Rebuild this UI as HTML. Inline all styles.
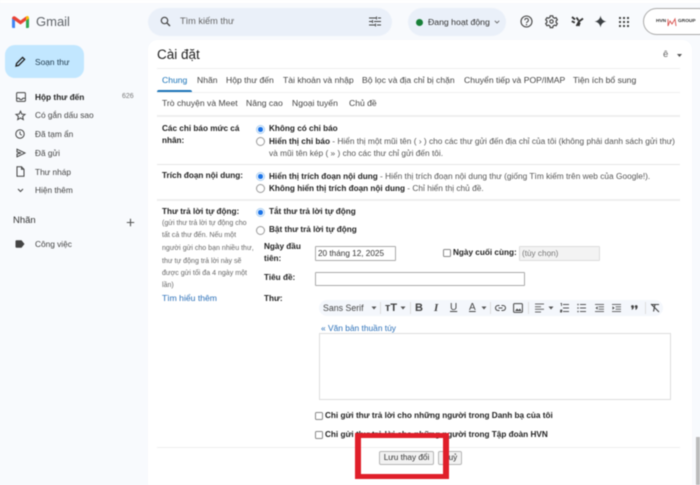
<!DOCTYPE html>
<html lang="vi">
<head>
<meta charset="utf-8">
<title>Gmail - Cài đặt</title>
<style>
html,body{margin:0;padding:0;}
body{width:700px;height:485px;overflow:hidden;background:#f8fafd;position:relative;font-family:"Liberation Sans","Noto Sans CJK SC",sans-serif;}
#w{position:absolute;left:0;top:0;width:700px;height:485px;filter:blur(.4px);}
.a{position:absolute;}
.t{position:absolute;white-space:nowrap;font-size:8.6px;line-height:12px;color:#444;transform:translateY(-6px);}
.b{font-weight:bold;color:#222;font-size:8.2px;}
.g{color:#555;font-size:8.33px;}
.s{font-size:7.05px;color:#666;}
.n{color:#444;font-size:8.3px;}
.l{color:#2a6fb8;}
.hr{position:absolute;left:157px;width:523px;height:1px;background:#e6e6e6;}
.r{position:absolute;width:7px;height:7px;border:1px solid #999;border-radius:50%;background:#fff;}
.r.on{border-color:#a9cdf0;background:#fff;}
.r.on:after{content:"";position:absolute;left:1.2px;top:1.2px;width:4.6px;height:4.6px;border-radius:50%;background:#1a73e8;}
.c{position:absolute;width:6px;height:6px;border:1px solid #8a8a8a;border-radius:1.5px;background:#fff;}
.i{position:absolute;border:1px solid #aaa;background:#fff;box-sizing:border-box;border-radius:1px;font-size:8.2px;line-height:13px;padding-left:2px;color:#333;white-space:nowrap;}
.btn{position:absolute;box-sizing:border-box;border:1px solid #b5b5b5;border-radius:2px;background:#f2f2f2;font-size:8.2px;line-height:12px;text-align:center;color:#333;}
svg{position:absolute;overflow:visible;}
</style>
</head>
<body>
<div id="w">
<div class="a" style="left:0;top:0;width:700px;height:3px;background:#fff"></div>

<!-- Logo -->
<svg style="left:11px;top:15px" width="19" height="14" viewBox="0 0 19 14">
<path d="M1 13V3l3 2v8H2a1 1 0 0 1-1-1z" fill="#4285f4"/>
<path d="M15 13V5l3-2v9a1 1 0 0 1-1 1z" fill="#34a853"/>
<path d="M15 1.5l1-.5c1-.3 2 .5 2 2v.5l-3 2z" fill="#fbbc04"/>
<path d="M1 3.500C1 1.500 3 .6 4.500 1.700L9.500 5.500 15 1.500V5.500L9.500 9.500 1 3.500z" fill="#ea4335"/>
</svg>
<div class="t" style="left:36px;top:22px;font-size:13px;line-height:16px;transform:translateY(-8px);color:#5f6368">Gmail</div>

<!-- Compose -->
<div class="a" style="left:5px;top:45px;width:79px;height:33px;background:#c2e7ff;border-radius:10px"></div>
<svg style="left:15px;top:56px" width="11" height="11" viewBox="0 0 11 11"><path d="M1 10l.6-2.600 6-6 2 2-6 6z" fill="none" stroke="#1f1f1f" stroke-width="1.300"/></svg>
<div class="t" style="left:35px;top:62px;font-size:8.400px;color:#1f3a4d">Soạn thư</div>

<!-- Side nav -->
<svg style="left:16px;top:92px" width="10" height="10" viewBox="0 0 10 10"><rect x=".6" y=".6" width="8.800" height="8.800" rx="1" fill="none" stroke="#444" stroke-width="1"/><path d="M.6 6.200h2.500a2 2 0 0 0 3.800 0h2.500" fill="none" stroke="#444" stroke-width="1"/></svg>
<div class="t b" style="left:35px;top:97px;font-size:8.300px">Hộp thư đến</div>
<div class="t" style="left:122px;top:97px;font-size:7px;color:#777">626</div>
<svg style="left:15px;top:110px" width="11" height="11" viewBox="0 0 11 11"><path d="M5.500 1.200l1.300 2.900 3.200.3-2.400 2.100.7 3.100-2.800-1.700-2.800 1.700.7-3.100L1 4.400l3.200-.3z" fill="none" stroke="#444" stroke-width="1"/></svg>
<div class="t n" style="left:35px;top:115px">Có gắn dấu sao</div>
<svg style="left:15px;top:129px" width="10" height="10" viewBox="0 0 10 10"><circle cx="5" cy="5" r="4.200" fill="none" stroke="#444" stroke-width="1"/><path d="M5 2.500V5l1.800 1.200" fill="none" stroke="#444" stroke-width=".9"/></svg>
<div class="t n" style="left:35px;top:134px">Đã tạm ẩn</div>
<svg style="left:16px;top:148px" width="10" height="10" viewBox="0 0 10 10"><path d="M1 1.200L9 5 1 8.800V6l4-1-4-1z" fill="none" stroke="#444" stroke-width="1"/></svg>
<div class="t n" style="left:35px;top:153px">Đã gửi</div>
<svg style="left:16px;top:166px" width="9" height="11" viewBox="0 0 9 11"><path d="M1 .8h4.500L8 3.300v6.900H1z M5.500.8v2.500H8" fill="none" stroke="#444" stroke-width="1"/></svg>
<div class="t n" style="left:35px;top:172px">Thư nháp</div>
<svg style="left:17px;top:188px" width="7" height="5" viewBox="0 0 7 5"><path d="M1 1l2.500 2.500L6 1" fill="none" stroke="#444" stroke-width="1"/></svg>
<div class="t n" style="left:35px;top:190px">Hiện thêm</div>
<div class="t" style="left:13px;top:221px;font-size:9.500px;color:#333">Nhãn</div>
<svg style="left:126px;top:218px" width="9" height="9" viewBox="0 0 9 9"><path d="M4.500 .8v7.400M.8 4.500h7.400" stroke="#555" stroke-width="1.100"/></svg>
<svg style="left:15px;top:240px" width="10" height="8" viewBox="0 0 10 8"><path d="M.5 1.300a1 1 0 0 1 1-1h5l3 3.700-3 3.700h-5a1 1 0 0 1-1-1z" fill="#444"/></svg>
<div class="t n" style="left:35px;top:244px">Công việc</div>

<!-- Search -->
<div class="a" style="left:148px;top:8px;width:244px;height:28px;background:#eaf0f9;border-radius:14px"></div>
<svg style="left:160px;top:16px" width="11" height="11" viewBox="0 0 11 11"><circle cx="4.500" cy="4.500" r="3.200" fill="none" stroke="#444" stroke-width="1.200"/><path d="M7 7l3 3" stroke="#444" stroke-width="1.300"/></svg>
<div class="t" style="left:180px;top:21px;font-size:9.200px;color:#666">Tìm kiếm thư</div>
<svg style="left:369px;top:16px" width="12" height="11" viewBox="0 0 12 11"><path d="M0 2h7M9 2h3M0 5.500h3M5 5.500h7M0 9h6M8 9h4M7.500 .5v3M3.500 4v3M6.500 7.500v3" stroke="#444" stroke-width=".9" fill="none"/></svg>

<!-- Status -->
<div class="a" style="left:408px;top:8px;width:98px;height:28px;background:#eaf0f9;border-radius:14px"></div>
<div class="a" style="left:416px;top:19px;width:7px;height:7px;border-radius:50%;background:#188038"></div>
<div class="t" style="left:428px;top:22px;font-size:8.700px;color:#333">Đang hoạt động</div>
<svg style="left:494px;top:20px" width="6" height="4" viewBox="0 0 6 4"><path d="M.8.800L3 3 5.200.800" fill="none" stroke="#666" stroke-width=".9"/></svg>

<!-- Top right icons -->
<svg style="left:520px;top:15px" width="13" height="13" viewBox="0 0 13 13"><circle cx="6.500" cy="6.500" r="5.500" fill="none" stroke="#444" stroke-width="1.100"/><path d="M4.800 5.200a1.800 1.800 0 1 1 2.700 1.500c-.6.400-1 .7-1 1.400" fill="none" stroke="#444" stroke-width="1"/><circle cx="6.500" cy="9.700" r=".7" fill="#444"/></svg>
<svg style="left:545px;top:15px" width="13" height="13" viewBox="0 0 13 13"><path d="M5.300 .8h2.400l.4 1.600 1.400.8 1.600-.5 1.200 2.100-1.200 1.100v1.600l1.200 1.100-1.200 2.100-1.600-.5-1.400.8-.4 1.600H5.300l-.4-1.600-1.400-.8-1.600.5L.7 8.600l1.200-1.100V5.900L.7 4.800l1.200-2.100 1.600.5 1.400-.8z" fill="none" stroke="#444" stroke-width="1.200"/><circle cx="6.500" cy="6.500" r="1.700" fill="none" stroke="#444" stroke-width="1.100"/></svg>
<svg style="left:571px;top:16px" width="13" height="11" viewBox="0 0 13 11"><path d="M1 1l3 2.500M.8 5.200l3 1.500M5.500 1.500l2 3M12 2.500L8 5.500 5.500 10M8.800 6.500L7.500 10" fill="none" stroke="#333" stroke-width="1.800"/></svg>
<svg style="left:594px;top:15px" width="13" height="13" viewBox="0 0 13 13"><path d="M6.500 .5C7 4 9 6 12.500 6.500 9 7 7 9 6.500 12.500 6 9 4 7 .5 6.500 4 6 6 4 6.500 .5z" fill="#3c4043"/></svg>
<svg style="left:619px;top:17px" width="10" height="10" viewBox="0 0 10 10" fill="#444"><rect x="0" y="0" width="2" height="2"/><rect x="4" y="0" width="2" height="2"/><rect x="8" y="0" width="2" height="2"/><rect x="0" y="4" width="2" height="2"/><rect x="4" y="4" width="2" height="2"/><rect x="8" y="4" width="2" height="2"/><rect x="0" y="8" width="2" height="2"/><rect x="4" y="8" width="2" height="2"/><rect x="8" y="8" width="2" height="2"/></svg>
<div class="a" style="left:643px;top:8px;width:70px;height:27px;box-sizing:border-box;border:1px solid #aaa;border-radius:14px;background:#fff"></div>
<div class="t" style="left:656px;top:22px;font-size:4.800px;font-weight:bold;color:#333">HVN</div>
<svg style="left:667px;top:18px" width="10" height="9" viewBox="0 0 10 9"><path d="M1 1v7M1 8l2-5 2 3 3-5 1 7" fill="none" stroke="#d9534f" stroke-width=".9"/></svg>
<div class="t" style="left:678px;top:22px;font-size:4.800px;font-weight:bold;color:#333">GROUP</div>

<!-- Main panel -->
<div class="a" style="left:148px;top:40px;width:544px;height:445px;background:#fff;border-radius:10px 10px 0 0"></div>
<div class="t" style="left:157px;top:55px;font-size:13.500px;line-height:16px;transform:translateY(-8px);color:#222">Cài đặt</div>
<div class="t" style="left:663px;top:55px;font-size:9.500px;color:#666">ê</div>
<svg style="left:677px;top:54px" width="5" height="3" viewBox="0 0 5 3"><path d="M0 0h5L2.500 3z" fill="#555"/></svg>
<div class="a" style="left:157px;top:68px;width:523px;height:1px;background:#eee"></div>

<!-- Tabs -->
<div class="t" style="left:162px;top:80px;color:#1a73b8">Chung</div>
<div class="t" style="left:197px;top:80px">Nhãn</div>
<div class="t" style="left:226px;top:80px">Hộp thư đến</div>
<div class="t" style="left:283px;top:80px">Tài khoản và nhập</div>
<div class="t" style="left:362px;top:80px">Bộ lọc và địa chỉ bị chặn</div>
<div class="t" style="left:464px;top:80px">Chuyển tiếp và POP/IMAP</div>
<div class="t" style="left:573px;top:80px">Tiện ích bổ sung</div>
<div class="a" style="left:157px;top:90px;width:35px;height:2px;background:#1a73b8;border-radius:2px 2px 0 0"></div>
<div class="a" style="left:157px;top:92px;width:523px;height:1px;background:#f0f0f0"></div>
<div class="t" style="left:162px;top:103px">Trò chuyện và Meet</div>
<div class="t" style="left:246px;top:103px">Nâng cao</div>
<div class="t" style="left:292px;top:103px">Ngoại tuyến</div>
<div class="t" style="left:349px;top:103px">Chủ đề</div>
<div class="a" style="left:157px;top:115px;width:523px;height:2px;background:#eee"></div>

<!-- Section 1 -->
<div class="t b" style="left:162px;top:129px">Các chỉ báo mức cá</div>
<div class="t b" style="left:162px;top:141px">nhân:</div>
<span class="r on" style="left:256px;top:125px"></span>
<div class="t b" style="left:269px;top:129px">Không có chỉ báo</div>
<span class="r" style="left:256px;top:137px"></span>
<div class="t g" style="left:269px;top:141px"><span class="b">Hiển thị chỉ báo</span> - Hiển thị một mũi tên ( › ) cho các thư gửi đến địa chỉ của tôi (không phải danh sách gửi thư)</div>
<div class="t g" style="left:269px;top:153px">và mũi tên kép ( » ) cho các thư chỉ gửi đến tôi.</div>
<div class="hr" style="top:164px"></div>

<!-- Section 2 -->
<div class="t b" style="left:162px;top:176px">Trích đoạn nội dung:</div>
<span class="r on" style="left:256px;top:172px"></span>
<div class="t g" style="left:269px;top:176px"><span class="b">Hiển thị trích đoạn nội dung</span> - Hiển thị trích đoạn nội dung thư (giống Tìm kiếm trên web của Google!).</div>
<span class="r" style="left:256px;top:184px"></span>
<div class="t g" style="left:269px;top:188px"><span class="b">Không hiển thị trích đoạn nội dung</span> - Chỉ hiển thị chủ đề.</div>
<div class="a" style="left:157px;top:199px;width:523px;height:2px;background:#eee"></div>

<!-- Section 3 -->
<div class="t b" style="left:162px;top:212px">Thư trả lời tự động:</div>
<div class="t s" style="left:162px;top:224px">(gửi thư trả lời tự động cho</div>
<div class="t s" style="left:162px;top:236px">tất cả thư đến. Nếu một</div>
<div class="t s" style="left:162px;top:249px">người gửi cho bạn nhiều thư,</div>
<div class="t s" style="left:162px;top:262px">thư tự động trả lời này sẽ</div>
<div class="t s" style="left:162px;top:274px">được gửi tối đa 4 ngày một</div>
<div class="t s" style="left:162px;top:286px">lần)</div>
<div class="t l" style="left:162px;top:298px">Tìm hiểu thêm</div>

<span class="r on" style="left:256px;top:208px"></span>
<div class="t b" style="left:269px;top:212px">Tắt thư trả lời tự động</div>
<span class="r" style="left:256px;top:226px"></span>
<div class="t b" style="left:269px;top:230px">Bật thư trả lời tự động</div>

<div class="t b" style="left:264px;top:247px">Ngày đầu</div>
<div class="t b" style="left:264px;top:259px">tiên:</div>
<div class="i" style="left:315px;top:246px;width:81px;height:15px">20 tháng 12, 2025</div>
<span class="c" style="left:443px;top:249px"></span>
<div class="t b" style="left:453px;top:253px">Ngày cuối cùng:</div>
<div class="i" style="left:519px;top:246px;width:81px;height:15px;background:#f3f3f3;border-color:#ddd;color:#777">(tùy chọn)</div>
<div class="t b" style="left:264px;top:278px">Tiêu đề:</div>
<div class="i" style="left:315px;top:272px;width:210px;height:14px"></div>
<div class="t b" style="left:264px;top:299px">Thư:</div>

<!-- Toolbar -->
<div class="a" style="left:319px;top:300px;width:344px;height:16px;background:#f4f7fc;border-radius:8px"></div>
<div class="t" style="left:323px;top:308px;font-size:8.800px;color:#444">Sans Serif</div>
<svg style="left:371px;top:306px" width="6" height="4" viewBox="0 0 6 4"><path d="M.5 .5h5L3 3.500z" fill="#555"/></svg>
<div class="a" style="left:380px;top:302px;width:1px;height:12px;background:#ddd"></div>
<div class="t" style="left:385px;top:308px;font-size:11px;font-weight:bold;color:#444">тT</div>
<svg style="left:400px;top:306px" width="6" height="4" viewBox="0 0 6 4"><path d="M.5 .5h5L3 3.500z" fill="#555"/></svg>
<div class="a" style="left:410px;top:302px;width:1px;height:12px;background:#ddd"></div>
<div class="t" style="left:415px;top:308px;font-size:11px;font-weight:bold;color:#444">B</div>
<div class="t" style="left:434px;top:308px;font-size:11px;font-style:italic;font-weight:bold;font-family:'Liberation Serif',serif;color:#444">I</div>
<div class="t" style="left:450px;top:308px;font-size:10px;text-decoration:underline;color:#444">U</div>
<div class="t" style="left:469px;top:308px;font-size:10px;text-decoration:underline;color:#444">A</div>
<svg style="left:481px;top:306px" width="6" height="4" viewBox="0 0 6 4"><path d="M.5 .5h5L3 3.500z" fill="#555"/></svg>
<div class="a" style="left:490px;top:302px;width:1px;height:12px;background:#ddd"></div>
<svg style="left:495px;top:304px" width="11" height="8" viewBox="0 0 11 8"><path d="M4.500 1.500H3a2.500 2.500 0 0 0 0 5h1.500M6.500 1.500H8a2.500 2.500 0 0 1 0 5H6.500M3.500 4h4" fill="none" stroke="#444" stroke-width="1"/></svg>
<svg style="left:513px;top:303px" width="10" height="10" viewBox="0 0 10 10"><rect x=".6" y=".6" width="8.800" height="8.800" rx="1" fill="none" stroke="#444" stroke-width="1"/><path d="M2 8l2-2.500 1.500 1.500L7 5.500 8.500 8z" fill="#444"/></svg>
<div class="a" style="left:528px;top:302px;width:1px;height:12px;background:#ddd"></div>
<svg style="left:535px;top:303px" width="9" height="10" viewBox="0 0 9 10"><path d="M0 1h9M0 3.700h6M0 6.300h9M0 9h6" stroke="#666" stroke-width="1"/></svg>
<svg style="left:548px;top:306px" width="6" height="4" viewBox="0 0 6 4"><path d="M.5 .5h5L3 3.500z" fill="#555"/></svg>
<svg style="left:560px;top:303px" width="9" height="10" viewBox="0 0 9 10"><path d="M3 1.500h6M3 5h6M3 8.500h6M.5 .5h1v2.500M.3 7h1.500v1H.5v1h1.500" fill="none" stroke="#555" stroke-width=".9"/></svg>
<svg style="left:577px;top:303px" width="9" height="10" viewBox="0 0 9 10"><path d="M3 1.500h6M3 5h6M3 8.500h6" stroke="#555" stroke-width=".9"/><circle cx="1" cy="1.500" r=".8" fill="#555"/><circle cx="1" cy="5" r=".8" fill="#555"/><circle cx="1" cy="8.500" r=".8" fill="#555"/></svg>
<svg style="left:595px;top:303px" width="9" height="10" viewBox="0 0 10 10"><path d="M0 1h10M4 3.700h6M4 6.300h6M0 9h10" stroke="#555" stroke-width="1"/><path d="M3 3v4L.5 5z" fill="#555"/></svg>
<svg style="left:612px;top:303px" width="9" height="10" viewBox="0 0 10 10"><path d="M0 1h10M4 3.700h6M4 6.300h6M0 9h10" stroke="#555" stroke-width="1"/><path d="M.5 3v4L3 5z" fill="#555"/></svg>
<svg style="left:631px;top:305px" width="7" height="5" viewBox="0 0 7 5" fill="#444"><circle cx="1.500" cy="1.500" r="1.400"/><circle cx="5.200" cy="1.500" r="1.400"/><path d="M2.900 1.500C2.900 3.500 1.800 4.500.8 5V3zM6.600 1.500c0 2-1.100 3-2.100 3.500V3z"/></svg>
<div class="a" style="left:645px;top:302px;width:1px;height:12px;background:#ddd"></div>
<svg style="left:650px;top:303px" width="10" height="10" viewBox="0 0 10 10"><path d="M1 1.500h8M5 1.500L3.500 8.500M1 1l8 8" fill="none" stroke="#444" stroke-width="1.100"/></svg>

<div class="t l" style="left:321px;top:328px;font-size:8.400px">« Văn bản thuần túy</div>
<div class="a" style="left:319px;top:333px;width:352px;height:67px;box-sizing:border-box;border:1px solid #ddd;background:#fff"></div>

<span class="c" style="left:315px;top:412px"></span>
<div class="t b" style="left:325px;top:416px">Chỉ gửi thư trả lời cho những người trong Danh bạ của tôi</div>
<span class="c" style="left:315px;top:431px"></span>
<div class="t b" style="left:325px;top:435px">Chỉ gửi thư trả lời cho những người trong Tập đoàn HVN</div>
<div class="hr" style="top:447px;width:523px;background:#eee"></div>

<div class="btn" style="left:379px;top:451px;width:55px;height:14px">Lưu thay đổi</div>
<div class="btn" style="left:438px;top:451px;width:24px;height:14px">Huỷ</div>

<!-- Red highlight -->
<div class="a" style="left:355px;top:433px;width:94px;height:46px;box-sizing:border-box;border:6px solid #e01f2a;border-top-width:5px;border-bottom-width:5px"></div>

<!-- Scrollbar -->
<div class="a" style="left:696px;top:437px;width:4px;height:48px;background:#bbb"></div>
</div>
</body>
</html>
